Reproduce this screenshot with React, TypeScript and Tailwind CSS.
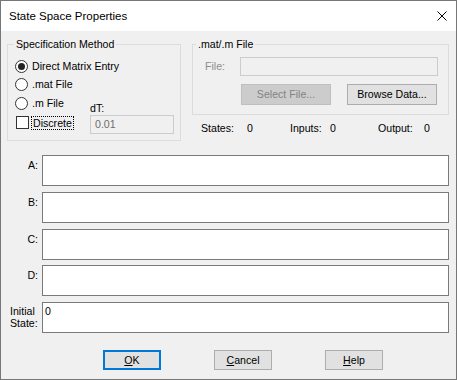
import React from "react";

const MATRICES = ["A", "B", "C", "D"];

function Radio({ label, checked }: { label: string; checked?: boolean }) {
  return (
    <div className="flex items-center">
      <div className="w-[13px] h-[13px] rounded-full border border-[#333] bg-white flex items-center justify-center">
        {checked && <div className="w-[7px] h-[7px] rounded-full bg-[#222]" />}
      </div>
      <span className="ml-[4px]">{label}</span>
    </div>
  );
}

function Button({
  children,
  className = "",
  disabled,
  primary,
}: {
  children: React.ReactNode;
  className?: string;
  disabled?: boolean;
  primary?: boolean;
}) {
  const look = disabled
    ? "bg-[#cccccc] border border-[#bfbfbf] text-[#838383]"
    : primary
    ? "bg-[#e1e1e1] border-2 border-[#0078d7] text-black"
    : "bg-[#e1e1e1] border border-[#adadad] text-black";
  return (
    <div className={`flex items-center justify-center ${look} ${className}`}>
      {children}
    </div>
  );
}

export default function App() {
  return (
    <div className="w-[457px] h-[380px] border border-[#777777] flex flex-col font-['Liberation_Sans',Arial,sans-serif] text-[10.6px] leading-[13px] text-black">
      {/* Title bar */}
      <div className="h-[30px] bg-white flex items-center justify-between pl-[8px] pr-[9px]">
        <span className="text-[11.5px] font-['Liberation_Sans',sans-serif] text-black">
          State Space Properties
        </span>
        <svg width="10" height="10" viewBox="0 0 10 10" className="mb-[1px]">
          <path d="M0.5 0.5 L9.5 9.5 M9.5 0.5 L0.5 9.5" stroke="#000" strokeWidth="1" />
        </svg>
      </div>

      {/* Body */}
      <div className="flex-1 bg-[#f0f0f0] flex flex-col">
        <div className="flex pl-[6px] pt-[7px]">
          {/* Specification Method */}
          <fieldset className="w-[174px] h-[103px] border border-[#dcdcdc]">
            <legend className="ml-[6px] px-[2px]">Specification Method</legend>
            <div className="pl-[7px]">
              <div className="mt-[6px] h-[18px] flex items-center">
                <Radio label="Direct Matrix Entry" checked />
              </div>
              <div className="h-[19px] flex items-center">
                <Radio label=".mat File" />
              </div>
              <div className="h-[19px] flex items-start">
                <div className="w-[75px] h-[19px] flex items-center">
                  <Radio label=".m File" />
                </div>
                <span className="mt-[8px]">dT:</span>
              </div>
            </div>
            <div className="flex items-start">
              <div className="w-[82px] flex items-start pl-[8px]">
                <div className="mt-[3px] w-[13px] h-[13px] border border-[#333] bg-white" />
                <div className="mt-[3px] ml-[2px] h-[14px] px-[1px] border border-dotted border-black flex items-center">
                  Discrete
                </div>
              </div>
              <div className="mt-[2px] w-[84px] h-[19px] border border-[#cccccc] bg-[#f0f0f0] text-[#6d6d6d] flex items-center pl-[4px]">
                0.01
              </div>
            </div>
          </fieldset>

          <div className="ml-[11px] flex flex-col">
            {/* .mat/.m File */}
            <fieldset className="w-[257px] h-[77px] border border-[#dcdcdc]">
              <legend className="ml-[3px] px-[2px]">.mat/.m File</legend>
              <div className="mt-[6px] flex items-center pl-[12px]">
                <span className="w-[35px] text-[#8d8d8d]">File:</span>
                <div className="w-[198px] h-[19px] border border-[#cccccc] bg-[#f0f0f0]" />
              </div>
              <div className="mt-[8px] flex pl-[48px]">
                <Button disabled className="w-[90px] h-[21px]">
                  Select File...
                </Button>
                <Button className="ml-[16px] w-[90px] h-[21px]">Browse Data...</Button>
              </div>
            </fieldset>
            <div className="mt-[7px] pl-[9px] flex">
              <span className="w-[46px]">States:</span>
              <span className="w-[43px]">0</span>
              <span className="w-[40px]">Inputs:</span>
              <span className="w-[48px]">0</span>
              <span className="w-[46px]">Output:</span>
              <span>0</span>
            </div>
          </div>
        </div>

        {/* Matrices */}
        <div className="mt-[14px] flex flex-col gap-[6px]">
          {MATRICES.map((m) => (
            <div key={m} className={`flex ${m === "D" ? "-mt-[1px]" : ""}`}>
              <div className="w-[37px] text-right pt-[4px]">{m}:</div>
              <div className="ml-[4px] w-[407px] h-[31px] border border-[#7a7a7a] bg-white" />
            </div>
          ))}
          <div className="flex">
            <div className="w-[37px] pl-[9px] pt-[3px] leading-[12px]">
              Initial
              <br />
              State:
            </div>
            <div className="ml-[4px] w-[407px] h-[31px] border border-[#7a7a7a] bg-white pl-[2px] pt-[2px]">
              0
            </div>
          </div>
        </div>

        {/* Buttons */}
        <div className="mt-[17px] flex pl-[102px] gap-[53px]">
          <Button primary className="w-[58px] h-[20px]">
            <span>
              <span className="underline">O</span>K
            </span>
          </Button>
          <Button className="w-[58px] h-[20px]">
            <span>
              <span className="underline">C</span>ancel
            </span>
          </Button>
          <Button className="w-[58px] h-[20px]">
            <span>
              <span className="underline">H</span>elp
            </span>
          </Button>
        </div>
      </div>
    </div>
  );
}
